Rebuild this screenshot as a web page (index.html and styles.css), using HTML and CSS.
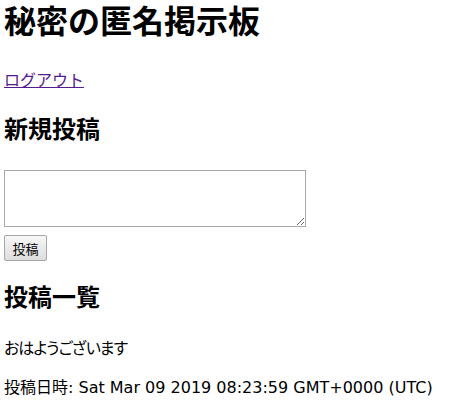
FILE: index.html
```html
<!DOCTYPE html>
<html lang="ja">
<head>
  <meta charset="utf-8" />
  <title>秘密の匿名掲示板</title>
  <link rel="stylesheet" href="styles.css">
</head>
<body>
  <h1 class="title">秘密の匿名掲示板</h1>
  <p class="logout"><a href="#">ログアウト</a></p>

  <h2 class="section">新規投稿</h2>
  <form class="post-form">
    <textarea class="post-body" name="body"></textarea>
    <button class="post-btn" type="submit">投稿</button>
  </form>

  <h2 class="section section-list">投稿一覧</h2>
  <div class="post">
    <p class="post-text">おはようございます</p>
    <p class="post-date">投稿日時: Sat Mar 09 2019 08:23:59 GMT+0000 (UTC)</p>
  </div>
</body>
</html>
```

FILE: styles.css
```css
/* base */
body{
  margin:0 4px;
  font-family:"DejaVu Sans","Noto Sans CJK JP",sans-serif;
  font-size:16px;
  color:#000;
  background:#fff;
}

.title{
  margin:0;
  font-size:32px;
  line-height:44px;
  font-weight:bold;
}

.logout{
  margin:25px 0 0;
  line-height:24px;
}
.logout a{color:#551a8b;}

.section{
  margin:21px 0 0;
  font-size:24px;
  line-height:32px;
  font-weight:bold;
}

/* form */
.post-form{margin-top:24px;}
.post-body{
  display:block;
  box-sizing:border-box;
  width:302px;
  height:57px;
  margin:0 0 8px;
  border:1px solid #a9a9a9;
  padding:2px;
}
.post-btn{
  box-sizing:border-box;
  width:43px;
  height:26px;
  padding:0;
  border:1px solid #a6a6a6;
  border-radius:2px;
  background:linear-gradient(#f7f7f7,#dddddd);
  font-family:"Noto Sans CJK JP",sans-serif;
  font-size:13px;
  color:#000;
}

/* posts */
.section-list{margin-top:21px;}
.post-text{
  margin:23px 0 0;
  line-height:24px;
  font-feature-settings:"palt";
  letter-spacing:-1px;
}
.post-date{
  margin:15px 0 0;
  line-height:24px;
}
```
